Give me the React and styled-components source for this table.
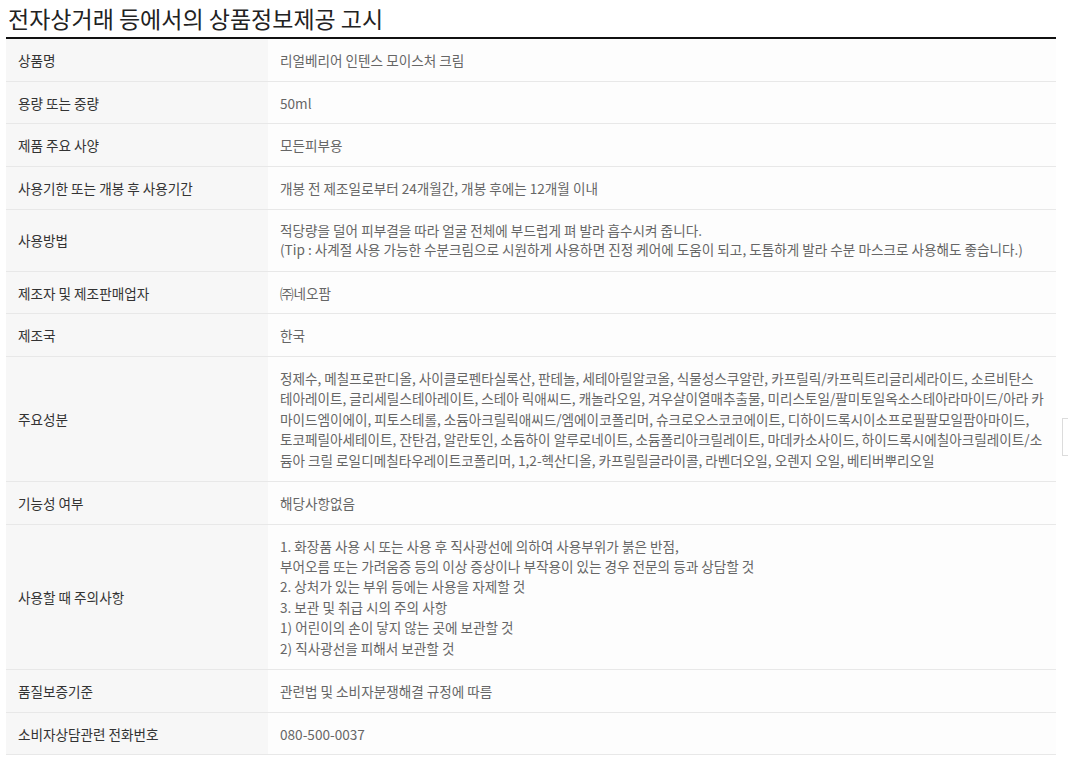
import React from "react";
import styled, { createGlobalStyle } from "styled-components";

const Global = createGlobalStyle`
  html, body { margin: 0; padding: 0; background: #fff; }
  body { font-family: "Noto Sans CJK KR", "Noto Sans", sans-serif; }
`;

const Page = styled.div`
  position: relative;
  padding: 0 12px 0 6px;
  width: 1068px;
  box-sizing: border-box;
`;

const Title = styled.h2`
  margin: 0;
  padding: 3px 0 3px 2px;
  font-size: 23px;
  line-height: 31px;
  font-weight: 400;
  color: #222;
  letter-spacing: 0;
  border-bottom: 2px solid #111;
`;

const Table = styled.div`
  display: flex;
  flex-direction: column;
`;

const Row = styled.div`
  display: flex;
  border-bottom: 1px solid #e8e8e8;
`;

const Label = styled.div`
  width: 262px;
  flex: none;
  box-sizing: border-box;
  background: #f7f7f7;
  padding: 11px 12px 10.67px;
  display: flex;
  align-items: center;
  font-size: 13.6px;
  line-height: 20px;
  color: #333;
`;

const Value = styled.div`
  flex: 1;
  background: #fdfdfd;
  padding: 11px 4px 10.67px 12px;
  font-size: 13.6px;
  line-height: ${(p) => (p.$tall ? "20.45px" : p.$double ? "19.67px" : "20px")};
  color: #666;
  white-space: nowrap;
`;

const Edge = styled.div`
  position: absolute;
  left: 1062px;
  top: 418px;
  width: 20px;
  height: 36px;
  border: 1px solid #dcdcdc;
  background: #fff;
`;

const rows = [
  ["상품명", ["리얼베리어 인텐스 모이스처 크림"]],
  ["용량 또는 중량", ["50ml"]],
  ["제품 주요 사양", ["모든피부용"]],
  ["사용기한 또는 개봉 후 사용기간", ["개봉 전 제조일로부터 24개월간, 개봉 후에는 12개월 이내"]],
  [
    "사용방법",
    [
      "적당량을 덜어 피부결을 따라 얼굴 전체에 부드럽게 펴 발라 흡수시켜 줍니다.",
      "(Tip : 사계절 사용 가능한 수분크림으로 시원하게 사용하면 진정 케어에 도움이 되고, 도톰하게 발라 수분 마스크로 사용해도 좋습니다.)",
    ],
  ],
  ["제조자 및 제조판매업자", ["㈜네오팜"]],
  ["제조국", ["한국"]],
  [
    "주요성분",
    [
      "정제수, 메칠프로판디올, 사이클로펜타실록산, 판테놀, 세테아릴알코올, 식물성스쿠알란, 카프릴릭/카프릭트리글리세라이드, 소르비탄스",
      "테아레이트, 글리세릴스테아레이트, 스테아 릭애씨드, 캐놀라오일, 겨우살이열매추출물, 미리스토일/팔미토일옥소스테아라마이드/아라 카",
      "마이드엠이에이, 피토스테롤, 소듐아크릴릭애씨드/엠에이코폴리머, 슈크로오스코코에이트, 디하이드록시이소프로필팔모일팜아마이드,",
      "토코페릴아세테이트, 잔탄검, 알란토인, 소듐하이 알루로네이트, 소듐폴리아크릴레이트, 마데카소사이드, 하이드록시에칠아크릴레이트/소",
      "듐아 크릴 로일디메칠타우레이트코폴리머, 1,2-헥산디올, 카프릴릴글라이콜, 라벤더오일, 오렌지 오일, 베티버뿌리오일",
    ],
  ],
  ["기능성 여부", ["해당사항없음"]],
  [
    "사용할 때 주의사항",
    [
      "1. 화장품 사용 시 또는 사용 후 직사광선에 의하여 사용부위가 붉은 반점,",
      "부어오름 또는 가려움증 등의 이상 증상이나 부작용이 있는 경우 전문의 등과 상담할 것",
      "2. 상처가 있는 부위 등에는 사용을 자제할 것",
      "3. 보관 및 취급 시의 주의 사항",
      "1) 어린이의 손이 닿지 않는 곳에 보관할 것",
      "2) 직사광선을 피해서 보관할 것",
    ],
  ],
  ["품질보증기준", ["관련법 및 소비자분쟁해결 규정에 따름"]],
  ["소비자상담관련 전화번호", ["080-500-0037"]],
];

export default function App() {
  return (
    <Page>
      <Global />
      <Title>전자상거래 등에서의 상품정보제공 고시</Title>
      <Table>
        {rows.map(([label, lines]) => (
          <Row key={label}>
            <Label>{label}</Label>
            <Value $tall={lines.length > 4} $double={lines.length === 2}>
              {lines.map((l, i) => (
                <React.Fragment key={i}>
                  {i > 0 && <br />}
                  {l}
                </React.Fragment>
              ))}
            </Value>
          </Row>
        ))}
      </Table>
      <Edge />
    </Page>
  );
}
